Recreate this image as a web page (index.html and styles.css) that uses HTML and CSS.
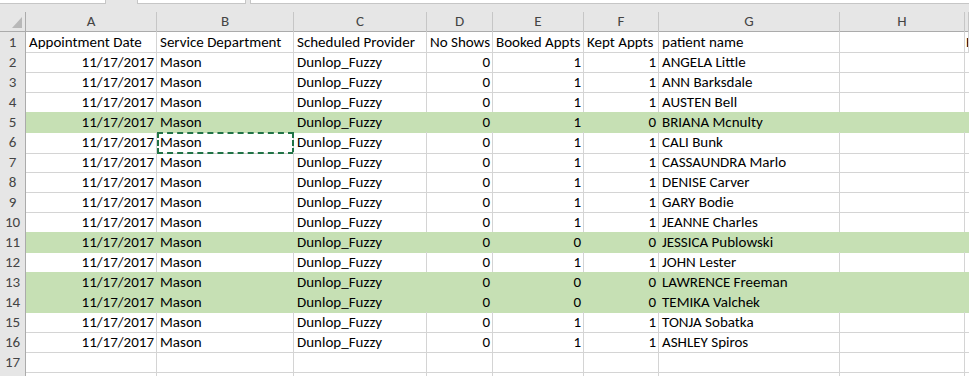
FILE: index.html
```html
<!DOCTYPE html>
<html lang="en">

<head>
  <meta charset="UTF-8">
  <title>Appointments - Mason</title>
  <link rel="stylesheet" href="styles.css">
</head>

<body>
  <div id="topbar">
    <div class="box nameBox"></div>
    <div class="box fxBox"></div>
    <div class="box formulaBox"></div>
  </div>

  <div id="sheet">
    <div class="row colHeads">
      <div class="corner">
        <svg width="26" height="19" viewBox="0 0 26 19">
          <polygon points="22,5 22,16 12,16" fill="#b8b8b8" />
        </svg>
      </div>
      <div class="colHead">A</div>
      <div class="colHead">B</div>
      <div class="colHead">C</div>
      <div class="colHead">D</div>
      <div class="colHead">E</div>
      <div class="colHead">F</div>
      <div class="colHead">G</div>
      <div class="colHead">H</div>
      <div class="colHead"></div>
    </div>
    <div id="rows"></div>
  </div>

  <script>
    var patients = [
      ['ANGELA Little', 0, 1, 1],
      ['ANN Barksdale', 0, 1, 1],
      ['AUSTEN Bell', 0, 1, 1],
      ['BRIANA Mcnulty', 0, 1, 0],
      ['CALI Bunk', 0, 1, 1],
      ['CASSAUNDRA Marlo', 0, 1, 1],
      ['DENISE Carver', 0, 1, 1],
      ['GARY Bodie', 0, 1, 1],
      ['JEANNE Charles', 0, 1, 1],
      ['JESSICA Publowski', 0, 0, 0],
      ['JOHN Lester', 0, 1, 1],
      ['LAWRENCE Freeman', 0, 0, 0],
      ['TEMIKA Valchek', 0, 0, 0],
      ['TONJA Sobatka', 0, 1, 1],
      ['ASHLEY Spiros', 0, 1, 1]
    ];

    function cell(text, cls) {
      return '<div class="cell ' + (cls || '') + '">' + text + '</div>';
    }

    function buildRows() {
      var html = [];

      // header row of the sheet
      html.push('<div class="row"><div class="rowHead">1</div>' +
        cell('Appointment Date') + cell('Service Department') + cell('Scheduled Provider') +
        cell('No Shows') + cell('Booked Appts') + cell('Kept Appts') + cell('patient name') +
        cell('') + cell('H', 'edge') + '</div>');

      patients.forEach(function (p, i) {
        // rows with nothing kept are flagged green
        var flagged = p[3] === 0 ? ' flagged' : '';
        var dept = i === 4 ? cell('Mason<span class="marquee"></span>', 'copied') : cell('Mason');
        html.push('<div class="row' + flagged + '"><div class="rowHead">' + (i + 2) + '</div>' +
          cell('11/17/2017', 'num') + dept + cell('Dunlop_Fuzzy') +
          cell(p[1], 'num') + cell(p[2], 'num') + cell(p[3], 'num') + cell(p[0]) +
          cell('') + cell('') + '</div>');
      });

      // trailing empty rows
      ['17', ''].forEach(function (n) {
        html.push('<div class="row"><div class="rowHead">' + n + '</div>' +
          cell('') + cell('') + cell('') + cell('') + cell('') + cell('') + cell('') + cell('') + cell('') + '</div>');
      });

      document.getElementById('rows').innerHTML = html.join('');
    }

    buildRows();
  </script>
</body>

</html>
```

FILE: styles.css
```css
body {
  margin: 0;
  padding: 0;
  background-color: #fff;
  font-family: Calibri, Carlito, Lato, sans-serif;
  font-size: 15px;
  color: #000;
  overflow: hidden;
}

#topbar {
  display: flex;
  height: 4px;
  background-color: #e6e6e6;
}

.box {
  height: 3px;
  background-color: #fff;
  border: 1px solid #c6c6c6;
  border-top: none;
}

.nameBox {
  width: 105px;
  border-left: none;
}

.fxBox {
  width: 107px;
  margin-left: 31px;
}

.formulaBox {
  flex: 1;
  margin-left: 4px;
  border-right: none;
}

.row {
  display: grid;
  grid-template-columns: 26px 131px 137px 133px 66px 91px 75px 181px 125px 1fr;
  height: 20px;
}

.colHeads {
  height: 28px;
  padding-top: 8px;
  box-sizing: border-box;
  background-color: #e6e6e6;
  border-bottom: 1px solid #ababab;
}

.corner,
.colHead {
  border-right: 1px solid #c6c6c6;
  color: #444;
  text-align: center;
  line-height: 19px;
}

.corner {
  border-right-color: #ababab;
}

.rowHead {
  background-color: #e6e6e6;
  border-right: 1px solid #ababab;
  border-bottom: 1px solid #d0d0d0;
  color: #444;
  text-align: center;
  line-height: 20px;
  box-sizing: border-box;
}

.cell {
  position: relative;
  border-right: 1px solid #d4d4d4;
  border-bottom: 1px solid #d4d4d4;
  padding: 0 2px 0 3px;
  line-height: 21px;
  white-space: nowrap;
  overflow: hidden;
  box-sizing: border-box;
}

.num {
  text-align: right;
}

.edge {
  padding-left: 1px;
}

.flagged .cell {
  background-color: #c6e0b4;
  border-color: #c6e0b4;
}

.copied {
  overflow: visible;
}

.marquee {
  position: absolute;
  top: 0;
  left: 0;
  right: -1px;
  bottom: -1px;
  border: 2px dashed #217346;
}
```
